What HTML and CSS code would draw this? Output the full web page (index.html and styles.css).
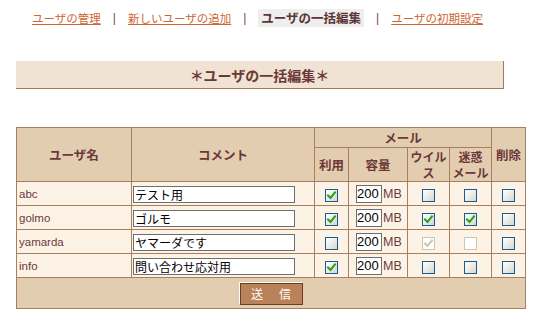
FILE: index.html
```html
<!DOCTYPE html>
<html lang="ja">
<head>
<meta charset="utf-8">
<title>ユーザの一括編集</title>
<link rel="stylesheet" href="styles.css">
</head>
<body>
<nav class="nav">
  <a class="nav-link" href="#">ユーザの管理</a>
  <span class="sep">|</span>
  <a class="nav-link" href="#">新しいユーザの追加</a>
  <span class="sep">|</span>
  <span class="nav-active">ユーザの一括編集</span>
  <span class="sep">|</span>
  <a class="nav-link" href="#">ユーザの初期設定</a>
</nav>

<h1 class="title">＊ユーザの一括編集＊</h1>

<table class="grid">
  <colgroup>
    <col class="c-user"><col class="c-comment"><col class="c-use"><col class="c-cap"><col class="c-virus"><col class="c-spam"><col class="c-del">
  </colgroup>
  <thead>
    <tr class="h1">
      <th rowspan="2">ユーザ名</th>
      <th rowspan="2">コメント</th>
      <th colspan="4">メール</th>
      <th rowspan="2">削除</th>
    </tr>
    <tr class="h2">
      <th>利用</th>
      <th>容量</th>
      <th class="two">ウイル<br>ス</th>
      <th class="two">迷惑<br>メール</th>
    </tr>
  </thead>
  <tbody>
    <tr>
      <td class="name">abc</td>
      <td class="cmt"><span class="txt wide">テスト用</span></td>
      <td class="ctr"><span class="cb on"><svg viewBox="0 0 11 11"><path d="M2 5.5 L4.5 8 L9 2.5"/></svg></span></td>
      <td class="ctr"><span class="txt cap">200</span><span class="mb">MB</span></td>
      <td class="ctr"><span class="cb"></span></td>
      <td class="ctr"><span class="cb"></span></td>
      <td class="ctr"><span class="cb"></span></td>
    </tr>
    <tr>
      <td class="name">golmo</td>
      <td class="cmt"><span class="txt wide">ゴルモ</span></td>
      <td class="ctr"><span class="cb on"><svg viewBox="0 0 11 11"><path d="M2 5.5 L4.5 8 L9 2.5"/></svg></span></td>
      <td class="ctr"><span class="txt cap">200</span><span class="mb">MB</span></td>
      <td class="ctr"><span class="cb on"><svg viewBox="0 0 11 11"><path d="M2 5.5 L4.5 8 L9 2.5"/></svg></span></td>
      <td class="ctr"><span class="cb on"><svg viewBox="0 0 11 11"><path d="M2 5.5 L4.5 8 L9 2.5"/></svg></span></td>
      <td class="ctr"><span class="cb"></span></td>
    </tr>
    <tr>
      <td class="name">yamarda</td>
      <td class="cmt"><span class="txt wide">ヤマーダです</span></td>
      <td class="ctr"><span class="cb"></span></td>
      <td class="ctr"><span class="txt cap">200</span><span class="mb">MB</span></td>
      <td class="ctr"><span class="cb dis on"><svg viewBox="0 0 11 11"><path d="M2 5.5 L4.5 8 L9 2.5"/></svg></span></td>
      <td class="ctr"><span class="cb dis"></span></td>
      <td class="ctr"><span class="cb"></span></td>
    </tr>
    <tr>
      <td class="name">info</td>
      <td class="cmt"><span class="txt wide">問い合わせ応対用</span></td>
      <td class="ctr"><span class="cb on"><svg viewBox="0 0 11 11"><path d="M2 5.5 L4.5 8 L9 2.5"/></svg></span></td>
      <td class="ctr"><span class="txt cap">200</span><span class="mb">MB</span></td>
      <td class="ctr"><span class="cb"></span></td>
      <td class="ctr"><span class="cb"></span></td>
      <td class="ctr"><span class="cb"></span></td>
    </tr>
  </tbody>
  <tfoot>
    <tr class="foot">
      <td colspan="7"><button class="submit" type="button">送　信</button></td>
    </tr>
  </tfoot>
</table>
</body>
</html>
```

FILE: styles.css
```css
html, body {
  margin: 0;
  padding: 0;
  background: #ffffff;
}
body {
  font-family: "Noto Sans CJK JP", "Liberation Sans", sans-serif;
  color: #6b3a3a;
  width: 545px;
  height: 318px;
  overflow: hidden;
}

/* navigation */
.nav {
  display: flex;
  align-items: center;
  height: 18px;
  padding-top: 9px;
  padding-left: 32px;
  font-size: 11.5px;
  line-height: 18px;
}
.nav-link {
  color: #cc6633;
  text-decoration: underline;
  text-underline-offset: 1px;
}
.sep {
  font-family: "Liberation Sans", sans-serif;
  font-size: 12px;
  color: #7b4a3b;
  margin: 0 12px;
}
.nav-active {
  background: #eeeeee;
  padding: 0 3px;
  font-weight: bold;
  font-size: 12.5px;
  color: #5c3636;
}

/* title */
.title {
  margin: 34px 0 0 16px;
  width: 487px;
  height: 27px;
  background: #f0e3d4;
  border-right: 1px solid #a47c5c;
  border-bottom: 1px solid #a47c5c;
  text-align: center;
  font-size: 14px;
  line-height: 28px;
  font-weight: bold;
  color: #6b3838;
}

/* table */
.grid {
  margin: 38px 0 0 16px;
  border-collapse: collapse;
  table-layout: fixed;
  width: 510px;
  font-size: 12px;
}
.c-user { width: 115px; }
.c-comment { width: 183px; }
.c-use { width: 34px; }
.c-cap { width: 59px; }
.c-virus { width: 42px; }
.c-spam { width: 42px; }
.c-del { width: 34px; }

.grid th, .grid td {
  border: 1px solid #a8805e;
  padding: 0;
}
.grid th {
  background: #e3cdb0;
  color: #6b3838;
  font-weight: bold;
  font-size: 12.5px;
  line-height: 17px;
  text-align: center;
}
.grid th.two {
  font-size: 12px;
  line-height: 16px;
  padding-top: 1px;
}
.h1 { height: 20px; }
.h2 { height: 34px; }
.grid tbody tr { height: 24px; }
.grid tbody td {
  background: #fdf2e6;
  vertical-align: middle;
}
.name {
  font-family: "Liberation Sans", sans-serif;
  font-size: 11.5px;
  color: #6b3a3a;
  padding-left: 2px !important;
}
.cmt { padding-left: 1px !important; }
.ctr { text-align: center; }

.txt {
  display: inline-block;
  box-sizing: border-box;
  background: #ffffff;
  border: 1px solid #6e6e6e;
  color: #000000;
  vertical-align: middle;
  white-space: nowrap;
}
.wide {
  width: 162px;
  height: 17px;
  font-size: 12px;
  line-height: 15px;
  padding-left: 1px;
}
.cap {
  width: 26px;
  height: 18px;
  line-height: 16px;
  font-family: "Liberation Sans", sans-serif;
  font-size: 13px;
  text-align: left;
  padding-left: 0;
}
.mb {
  display: inline-block;
  vertical-align: middle;
  font-family: "Liberation Sans", sans-serif;
  font-size: 12.5px;
  color: #6b3a3a;
  margin-left: 1px;
  width: 17px;
  text-align: left;
}

/* checkboxes */
.cb {
  display: inline-block;
  box-sizing: border-box;
  width: 13px;
  height: 13px;
  border: 1px solid #1c5a8a;
  background: linear-gradient(135deg, #ffffff 0%, #f2f2ef 35%, #d6d6d0 100%);
  vertical-align: middle;
}
.cb svg {
  display: block;
  width: 11px;
  height: 11px;
}
.cb svg path {
  fill: none;
  stroke: #21a121;
  stroke-width: 2;
  stroke-linecap: square;
}
.cb.dis {
  border-color: #cac6b6;
  background: #ffffff;
}
.cb.dis svg path {
  stroke: #cac6b6;
}

/* footer */
.foot { height: 31px; }
.foot td {
  background: #e3cdb0;
  text-align: center;
  vertical-align: middle;
}
.submit {
  width: 63px;
  height: 22px;
  margin-top: 2px;
  padding: 0 0 0 2px;
  background: #b9825a;
  border: 1px solid #6e3c22;
  box-shadow: -1px -1px 0 #ffffff;
  color: #ffffff;
  font-family: "Noto Sans CJK JP", sans-serif;
  font-size: 12px;
  letter-spacing: 2px;
  line-height: 18px;
  cursor: pointer;
}
```
